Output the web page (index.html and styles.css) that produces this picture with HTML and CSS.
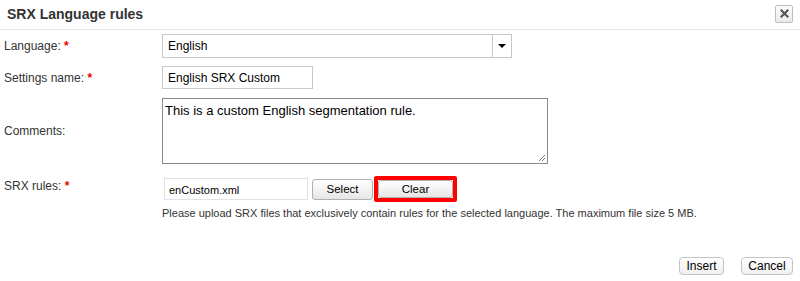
FILE: index.html
```html
<!DOCTYPE html>
<html>
<head>
<meta charset="utf-8">
<link rel="stylesheet" href="styles.css">
</head>
<body>
<div class="dialog">
  <div class="header">
    <h1 class="title">SRX Language rules</h1>
    <button class="close" aria-label="Close"><svg width="9" height="9" viewBox="0 0 9 9"><path d="M1.5 1.5 L7.5 7.5 M7.5 1.5 L1.5 7.5" stroke="#555" stroke-width="2.2" stroke-linecap="square"/></svg></button>
  </div>
  <div class="form">
    <div class="row row-lang">
      <label class="label">Language: <span class="req">*</span></label>
      <div class="select">
        <span class="select-value">English</span>
        <span class="select-btn"><span class="arrow"></span></span>
      </div>
    </div>
    <div class="row row-name">
      <label class="label">Settings name: <span class="req">*</span></label>
      <div class="input">English SRX Custom</div>
    </div>
    <div class="row row-comments">
      <label class="label">Comments:</label>
      <div class="textarea">This is a custom English segmentation rule.
        <svg class="grip" width="8" height="8" viewBox="0 0 8 8"><path d="M7 1 L1 7 M7 4 L4 7" stroke="#777" stroke-width="1"/></svg>
      </div>
    </div>
    <div class="row row-srx">
      <label class="label">SRX rules: <span class="req">*</span></label>
      <div class="file-controls">
        <div class="file-input">enCustom.xml</div>
        <button class="btn btn-select">Select</button>
        <span class="highlight"><button class="btn btn-clear">Clear</button></span>
      </div>
    </div>
    <div class="row row-help">
      <span class="label"></span>
      <p class="help">Please upload SRX files that exclusively contain rules for the selected language. The maximum file size 5 MB.</p>
    </div>
  </div>
  <div class="footer">
    <button class="btn2 btn-insert">Insert</button>
    <button class="btn2 btn-cancel">Cancel</button>
  </div>
</div>
</body>
</html>
```
FILE: styles.css
```css
* { box-sizing: border-box; }
html, body { margin: 0; padding: 0; background: #fff; }
body { font-family: "Liberation Sans", Arial, sans-serif; color: #333; width: 800px; height: 281px; overflow: hidden; }

.header {
  height: 30px;
  border-bottom: 1px solid #e6e6e6;
  display: flex;
  align-items: center;
  justify-content: space-between;
  padding: 0 7px 0 7px;
}
.title { margin: 0; font-size: 14px; font-weight: bold; color: #333; position: relative; top: -1px; }
.close {
  width: 18px; height: 18px; padding: 0;
  border: 1px solid #bdbdbd; border-radius: 2px;
  background: linear-gradient(#fdfdfd, #e9e9e9);
  display: flex; align-items: center; justify-content: center;
  position: relative; top: -1px;
}

.form { display: flex; flex-direction: column; }
.row { display: flex; align-items: center; }
.label { width: 162px; flex: none; padding-left: 4px; font-size: 12px; color: #333; }
.req { color: #e00; font-weight: bold; }

.row-lang { margin-top: 4px; }
.select {
  width: 350px; height: 24px;
  border: 1px solid #c8c8c8;
  display: flex; align-items: center;
}
.select-value { flex: 1; padding-left: 5px; font-size: 12px; color: #000; }
.select-btn {
  width: 19px; height: 22px; border-left: 1px solid #c8c8c8;
  display: flex; align-items: center; justify-content: center;
}
.arrow { width: 0; height: 0; border-left: 4px solid transparent; border-right: 4px solid transparent; border-top: 4px solid #000; }

.row-name { margin-top: 8px; }
.input {
  width: 151px; height: 23px; border: 1px solid #c8c8c8;
  font-size: 12px; color: #000; padding: 4px 5px; line-height: 14px;
}

.row-comments { margin-top: 9px; }
.textarea {
  position: relative;
  width: 386px; height: 66px; border: 1px solid #8a8a8a;
  font-size: 13px; color: #000; padding: 4px 2px; line-height: 15px;
}
.grip { position: absolute; right: 1px; bottom: 1px; }

.row-srx { margin-top: 12px; align-items: flex-start; }
.row-srx .label { padding-top: 3px; }
.file-controls { display: flex; align-items: center; }
.file-input {
  margin-left: 2px;
  width: 144px; height: 22px; border: 1px solid #dfe3e8;
  font-size: 11px; color: #000; padding: 5px 4px; line-height: 12px;
}
.btn {
  font-family: "Liberation Sans", Arial, sans-serif;
  font-size: 11.5px; color: #000;
  height: 21px; padding: 0;
  border: 1px solid #b0b0b0; border-radius: 3px;
  background: linear-gradient(#ffffff, #e6e6e6);
}
.btn-select { width: 61px; margin-left: 4px; }
.highlight { display: inline-flex; border: 4px solid #f00; border-radius: 2px; margin-left: 1px; }
.btn-clear { width: 75px; height: 18px; border-color: #b0b0b0; }

.row-help { margin-top: 5px; }
.help { margin: 0; font-size: 11px; color: #333; }

.footer {
  position: absolute; left: 0; right: 0; top: 257px;
  display: flex; justify-content: flex-end; gap: 17px; padding-right: 7px;
}
.btn2 {
  font-family: "Liberation Sans", Arial, sans-serif;
  font-size: 12px; color: #000; height: 18px; padding: 0;
  border: 1px solid #c4c4c4; border-radius: 4px;
  background: linear-gradient(#ffffff, #f0f0f0);
}
.btn-insert { width: 45px; }
.btn-cancel { width: 52px; }
```
